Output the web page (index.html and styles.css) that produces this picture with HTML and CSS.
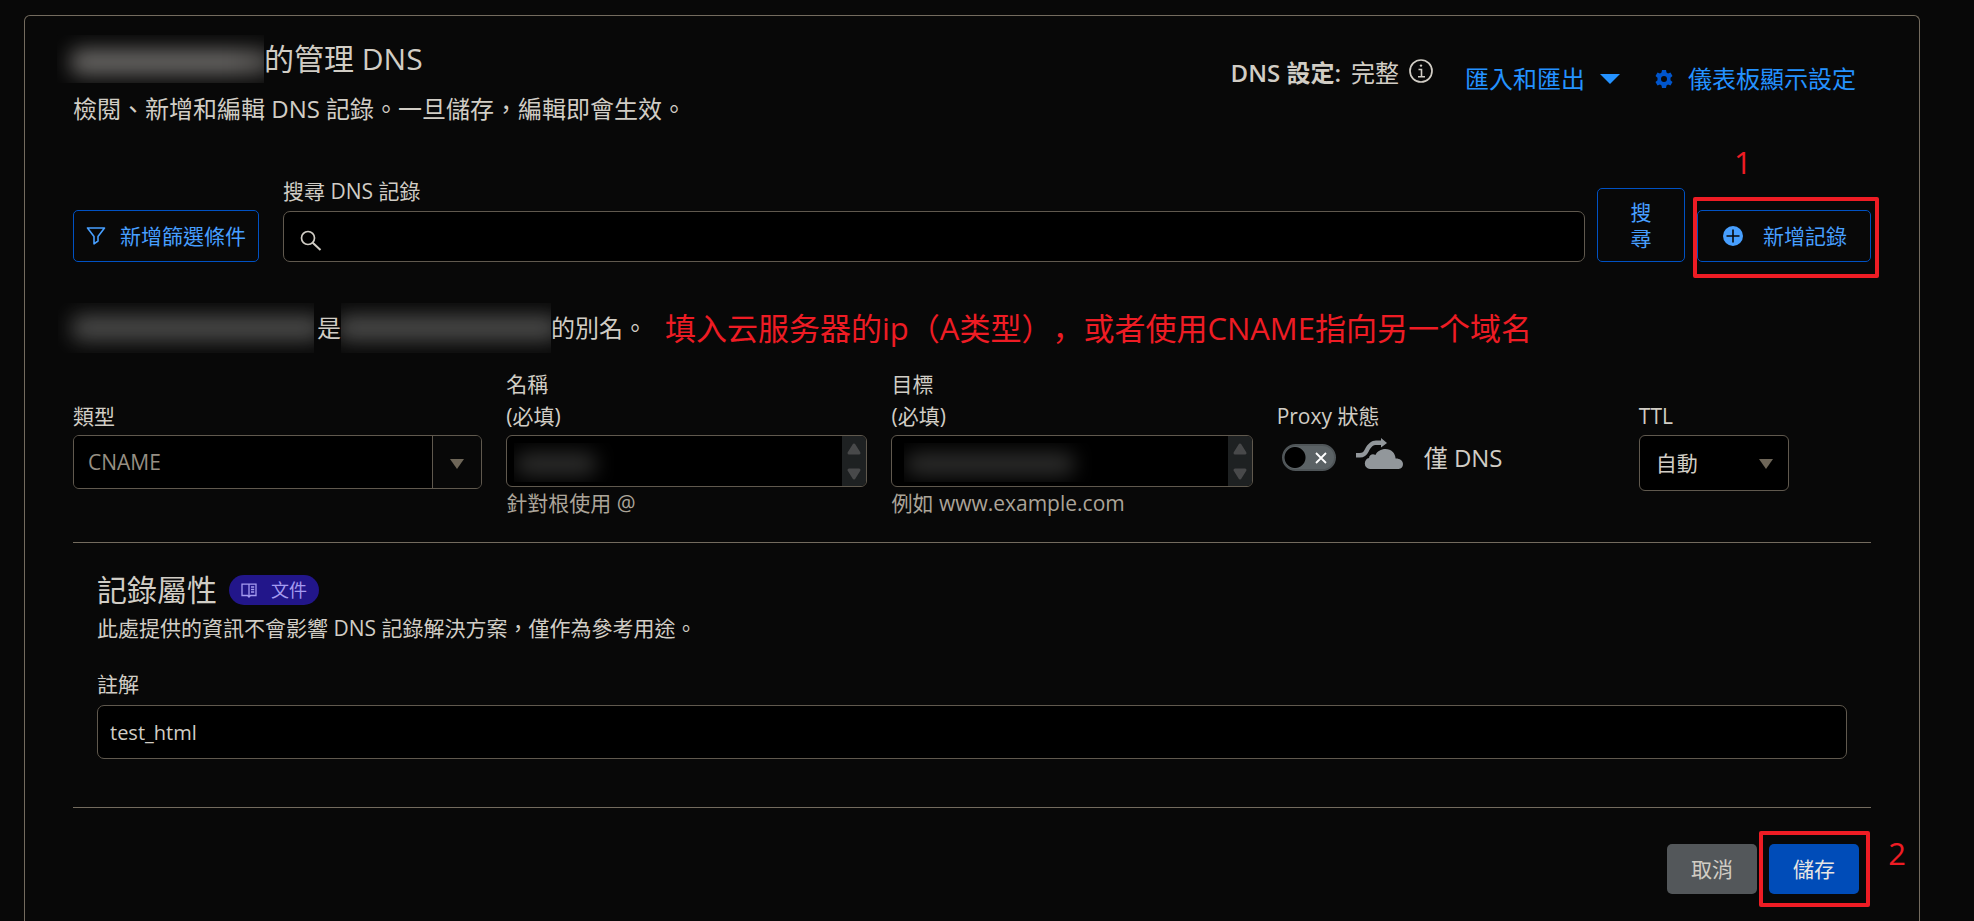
FILE: index.html
```html
<!DOCTYPE html>
<html lang="zh-Hant">
<head>
<meta charset="utf-8">
<meta name="viewport" content="width=device-width, initial-scale=1">
<title>DNS 記錄</title>
<link rel="stylesheet" href="styles.css">
</head>
<body>
<main class="card">
  <header class="header">
    <div>
      <h1 class="title"><span class="redacted redacted-title" aria-hidden="true"></span>的管理 DNS</h1>
      <p class="subtitle">檢閱、新增和編輯 DNS 記錄。一旦儲存，編輯即會生效。</p>
    </div>
    <div class="header-tools">
      <p class="status"><strong>DNS 設定:</strong><span>完整</span>
        <svg class="icon-info" viewBox="0 0 24 24" aria-hidden="true"><circle cx="12" cy="12" r="11" fill="none" stroke="currentColor" stroke-width="1.7"/><path d="M9.5 10.5h3v7M9 17.7h7" fill="none" stroke="currentColor" stroke-width="1.6"/><circle cx="12" cy="6.6" r="1.2" fill="currentColor"/></svg>
      </p>
      <button class="link-button" type="button">匯入和匯出
        <svg class="icon-caret" viewBox="0 0 20 10" aria-hidden="true"><path d="M0 0h20L10 10z" fill="currentColor"/></svg>
      </button>
      <a class="link-button settings" href="#settings">
        <svg class="icon-gear" viewBox="0 0 18 18" aria-hidden="true"><path fill-rule="evenodd" fill="currentColor" d="M7 0h4l.5 2.600 1.500.9 2.500-.9 2 3.400-2 1.800v2.400l2 1.800-2 3.400-2.500-.9-1.500.9L11 18H7l-.5-2.600-1.500-.9-2.500.9-2-3.400 2-1.800V7.800L.5 6l2-3.400 2.500.9 1.500-.9zM9 6a3 3 0 1 0 0 6a3 3 0 0 0 0-6z"/></svg>
        儀表板顯示設定</a>
    </div>
  </header>

  <form class="toolbar">
    <button class="button-outline filter" type="button">
      <svg class="icon-filter" viewBox="0 0 20 20" aria-hidden="true"><path d="M1.500 2h17L12 10.500V15l-4 2.800v-7.300z" fill="none" stroke="currentColor" stroke-width="1.600" stroke-linejoin="round"/></svg>
      新增篩選條件
    </button>
    <div class="search">
      <label class="label" for="search">搜尋 DNS 記錄</label>
      <div class="search-box">
        <svg class="icon-search" viewBox="0 0 22 22" aria-hidden="true"><circle cx="8" cy="8" r="6.500" fill="none" stroke="currentColor" stroke-width="1.700"/><path d="M12.700 12.700l7.800 7.300" stroke="currentColor" stroke-width="2"/></svg>
        <input class="search-input" id="search" type="text">
      </div>
    </div>
    <button class="button-outline search-button" type="submit">搜<br>尋</button>
    <div class="marked">
      <button class="button-outline add" type="button">
        <svg class="icon-plus" viewBox="0 0 20 20" aria-hidden="true"><circle cx="10" cy="10" r="10" fill="currentColor"/><path d="M10 3.500v13M3.500 10h13" stroke="#080808" stroke-width="1.600"/></svg>
        新增記錄
      </button>
      <span class="mark-box mark-box-add"></span>
      <span class="mark-number mark-number-add">1</span>
    </div>
  </form>

  <div class="alias">
    <p class="alias-text"><span class="redacted redacted-source" aria-hidden="true"></span>是<span class="redacted redacted-alias" aria-hidden="true"></span>的別名。</p>
    <p class="note" lang="zh-Hans">填入云服务器的ip（A类型），或者使用CNAME指向另一个域名</p>
  </div>

  <form class="record">
    <div class="fields">
      <div class="field">
        <label class="label field-label" for="type">類型</label>
        <div class="select-box type-box">
          <select class="select type-select" id="type"><option>CNAME</option></select>
          <svg class="select-arrow type-arrow" viewBox="0 0 14 10" aria-hidden="true"><path d="M0 0h14L7 10z" fill="currentColor"/></svg>
        </div>
      </div>
      <div class="field">
        <label class="label field-label" for="name"><span>名稱</span><span>(必填)</span></label>
        <div class="text-box">
          <textarea class="textarea" id="name" rows="1"></textarea>
          <span class="redacted redacted-name" aria-hidden="true"></span>
          <svg class="scroller" viewBox="0 0 24 50" aria-hidden="true"><path d="M12 9l5 8H7zM12 42l5-8H7z" fill="currentColor" stroke="currentColor" stroke-width="3" stroke-linejoin="round"/></svg>
        </div>
        <p class="hint">針對根使用 @</p>
      </div>
      <div class="field">
        <label class="label field-label" for="target"><span>目標</span><span>(必填)</span></label>
        <div class="text-box">
          <textarea class="textarea" id="target" rows="1"></textarea>
          <span class="redacted redacted-target" aria-hidden="true"></span>
          <svg class="scroller" viewBox="0 0 24 50" aria-hidden="true"><path d="M12 9l5 8H7zM12 42l5-8H7z" fill="currentColor" stroke="currentColor" stroke-width="3" stroke-linejoin="round"/></svg>
        </div>
        <p class="hint">例如 www.example.com</p>
      </div>
      <div class="field">
        <label class="label field-label" for="proxy">Proxy 狀態</label>
        <div class="proxy">
          <span class="toggle">
            <input class="toggle-input" id="proxy" type="checkbox">
            <svg class="toggle-cross" viewBox="0 0 12 12" aria-hidden="true"><path d="M1 1l10 10M11 1L1 11" stroke="currentColor" stroke-width="1.800"/></svg>
          </span>
          <svg class="icon-cloud" viewBox="0 0 47 31" aria-hidden="true"><path fill="currentColor" d="M14 31a5.500 5.500 0 0 1-5.200-5.500c0-3 2-5.200 4.200-5.600c.3-2.200 2-3.600 4-3.600c1 0 1.700.2 2.400.7C21 13.500 25 11 29.500 11c5.700 0 9.800 4.100 10.100 9.500C43.500 20.300 47 22.500 47 26a5 5 0 0 1-4.500 5z"/><path fill="currentColor" d="M0 15h3.500c3 0 4-1 5.500-4C12 5.500 15.500 2.500 20 2.500h5V0l6 5-6 4.500V7h-4.500c-3.700 0-5.400 1.800-7.800 6.500C10.500 17.500 8 19.500 4 19.500H0z"/></svg>
          <span class="proxy-text">僅 DNS</span>
        </div>
      </div>
      <div class="field">
        <label class="label field-label" for="ttl">TTL</label>
        <div class="select-box ttl-box">
          <select class="select ttl-select" id="ttl"><option>自動</option></select>
          <svg class="select-arrow ttl-arrow" viewBox="0 0 14 10" aria-hidden="true"><path d="M0 0h14L7 10z" fill="currentColor"/></svg>
        </div>
      </div>
    </div>

    <section class="attributes">
      <div class="attributes-head">
        <h2 class="section-title">記錄屬性</h2>
        <a class="badge" href="#docs">
          <svg class="icon-book" viewBox="0 0 16 16" aria-hidden="true"><path d="M8 2.200H1v11.300h5.500L8 15l1.500-1.500H15V2.200H8zM8 2.200V15M10 5h3.200M10 7.500h3.200M10 10h3.200" fill="none" stroke="currentColor" stroke-width="1.300"/></svg>
          文件</a>
      </div>
      <p class="description">此處提供的資訊不會影響 DNS 記錄解決方案，僅作為參考用途。</p>
      <label class="label comment-label" for="comment">註解</label>
      <input class="comment" id="comment" type="text" value="test_html">
    </section>

    <div class="actions">
      <button class="button cancel" type="button">取消</button>
      <div class="marked">
        <button class="button save" type="submit">儲存</button>
        <span class="mark-box mark-box-save"></span>
        <span class="mark-number mark-number-save">2</span>
      </div>
    </div>
  </form>
</main>
</body>
</html>
```

FILE: styles.css
```css
* {
  box-sizing: border-box;
}

body {
  margin: 0;
  min-height: 100vh;
  display: flex;
  padding: 15px 54px 0 24px;
  background: #080808;
  color: #d1cdc5;
  font-family: "Open Sans", "Noto Sans CJK TC", sans-serif;
  font-size: 21px;
  line-height: 28px;
}

h1, h2, p {
  margin: 0;
  font-weight: 400;
}

button, input, select, textarea {
  margin: 0;
  font: inherit;
  color: inherit;
}

button {
  cursor: pointer;
}

a {
  text-decoration: none;
}

svg {
  display: block;
  flex: none;
}

.card {
  flex: 1;
  min-width: 0;
  padding: 23px 48px 0;
  border: 1px solid #736b5e;
  border-bottom: 0;
  border-radius: 6px 6px 0 0;
}

/* Header */

.header {
  display: flex;
  justify-content: space-between;
}

.title {
  display: flex;
  align-items: center;
  height: 40px;
  font-size: 30px;
  line-height: 40px;
}

.subtitle {
  margin-top: 14px;
  font-size: 24px;
  line-height: 32px;
}

.header-tools {
  display: flex;
  align-items: flex-start;
  padding: 18px 15px 0 0;
  font-size: 24px;
  line-height: 32px;
}

.status {
  display: flex;
  gap: 10px;
  margin-right: 32px;
}

.status strong {
  font-weight: 600;
}

.icon-info {
  width: 24px;
  height: 24px;
  margin-top: 2px;
}

.link-button {
  display: flex;
  align-items: center;
  gap: 15px;
  margin-top: 6px;
  padding: 0;
  border: 0;
  background: none;
  color: #2492ff;
}

.settings {
  gap: 15px;
  margin-left: 35px;
}

.icon-caret {
  width: 20px;
  height: 10px;
}

.icon-gear {
  width: 18px;
  height: 18px;
  color: #0055cc;
}

/* Blurred-out private names */

.redacted {
  flex: none;
  overflow: hidden;
  pointer-events: none;
}

.redacted::before {
  content: "";
  display: block;
  height: 26px;
  margin: 12px -8px 0 14px;
  border-radius: 8px;
  background: #4a4a49;
  filter: blur(10px);
}

.redacted-title {
  width: 207px;
  height: 48px;
  margin-left: -16px;
}

.redacted-title::before {
  margin-top: 14px;
  background: linear-gradient(to right, #686664 80%, #4c4a48);
}

.redacted-source {
  width: 256px;
  height: 50px;
  margin: 0 3px 0 -15px;
}

.redacted-alias {
  width: 210px;
  height: 50px;
}

.redacted-alias::before {
  margin-left: -4px;
}

.redacted-name,
.redacted-target {
  position: absolute;
  top: 7px;
  left: 7px;
  width: 100px;
  height: 39px;
}

.redacted-target {
  left: 12px;
  width: 188px;
}

.redacted-name::before,
.redacted-target::before {
  height: 22px;
  margin: 10px 18px 0 2px;
  background: #2f2f2e;
}

/* Search toolbar */

.toolbar {
  display: flex;
  align-items: flex-end;
  gap: 12px;
  margin-top: 52px;
}

.button-outline {
  display: flex;
  align-items: center;
  justify-content: center;
  height: 52px;
  border: 1px solid #0051c3;
  border-radius: 5px;
  background: #080808;
  color: #479fff;
}

.filter {
  gap: 14px;
  margin-right: 12px;
  padding: 0 12px;
}

.icon-filter {
  width: 20px;
  height: 20px;
}

.search {
  flex: 1;
}

.label {
  display: block;
}

.search-box {
  display: flex;
  align-items: center;
  height: 51px;
  margin-top: 6px;
  padding-left: 16px;
  border: 1px solid #60594e;
  border-radius: 7px;
  background: #000;
}

.icon-search {
  width: 22px;
  height: 22px;
  margin-top: 8px;
}

.search-input {
  flex: 1;
  height: 100%;
  padding: 0 12px;
  border: 0;
  outline: 0;
  background: none;
}

.search-button {
  width: 88px;
  height: 74px;
  line-height: 26px;
}

.marked {
  position: relative;
}

.add {
  gap: 20px;
  padding: 0 23px 0 25px;
}

.icon-plus {
  width: 20px;
  height: 20px;
}

/* Red markers drawn over the controls */

.mark-box {
  position: absolute;
  border: 4px solid #ee1c24;
  border-radius: 2px;
  pointer-events: none;
}

.mark-box-add {
  inset: -13px -8px -16px -4px;
}

.mark-box-save {
  inset: -13px -11px -13px -10px;
}

.mark-number {
  position: absolute;
  color: #ee1c24;
  font-size: 31px;
  line-height: 40px;
}

.mark-number-add {
  top: -68px;
  left: 37px;
}

.mark-number-save {
  top: -11px;
  right: -47px;
}

/* Alias line */

.alias {
  display: flex;
  align-items: center;
  gap: 18px;
  height: 40px;
  margin-top: 46px;
}

.alias-text {
  display: flex;
  align-items: center;
  font-size: 24px;
}

.note {
  color: #ee1c24;
  font-family: "Open Sans", "Noto Sans CJK SC", sans-serif;
  font-size: 31px;
  line-height: 40px;
  text-spacing-trim: space-all;
  white-space: nowrap;
}

/* Record fields */

.fields {
  display: grid;
  grid-template-columns: 409fr 361fr 361fr 338fr 232fr;
  gap: 24px;
  margin-top: 20px;
  padding-bottom: 25px;
  border-bottom: 1px solid #736b5e;
}

.field {
  min-width: 0;
}

.field-label {
  display: flex;
  flex-direction: column;
  justify-content: flex-end;
  height: 64px;
  margin-bottom: 3px;
  line-height: 32px;
}

.select-box,
.text-box {
  position: relative;
  display: flex;
  overflow: hidden;
  border: 1px solid #60594e;
  border-radius: 6px;
  background: #000;
}

.select {
  flex: 1;
  appearance: none;
  height: 100%;
  border: 0;
  background: none;
}

.select-arrow {
  position: absolute;
  top: 23px;
  width: 14px;
  height: 10px;
  color: #6e6658;
  pointer-events: none;
}

.type-box {
  height: 54px;
}

.type-select {
  padding: 0 60px 0 14px;
  background: linear-gradient(to left, #080808 48px, #60594e 48px, #60594e 49px, #000 49px);
  color: #968f83;
}

.type-arrow {
  right: 17px;
}

.ttl-box {
  width: 150px;
  height: 56px;
}

.ttl-select {
  padding: 0 40px 0 16px;
}

.ttl-arrow {
  right: 15px;
}

.text-box {
  height: 52px;
}

.textarea {
  flex: 1;
  min-width: 0;
  padding: 11px;
  border: 0;
  outline: 0;
  resize: none;
  overflow: hidden;
  background: none;
}

.scroller {
  width: 24px;
  height: 50px;
  background: #1e2122;
  color: #48494a;
}

.hint {
  margin-top: 2px;
  color: #aba499;
}

.proxy {
  display: flex;
  align-items: center;
  padding: 3px 0 0 5px;
}

.toggle {
  position: relative;
  display: flex;
}

.toggle-input {
  appearance: none;
  width: 54px;
  height: 27px;
  border: 2px solid #4f5558;
  border-radius: 14px;
  background: radial-gradient(circle at 11px 50%, #000 10px, #5b6265 11px);
}

.toggle-cross {
  position: absolute;
  top: 8px;
  right: 9px;
  width: 12px;
  height: 12px;
  color: #fff;
  pointer-events: none;
}

.icon-cloud {
  width: 47px;
  height: 31px;
  margin: 0 21px 8px 20px;
  color: #92979b;
}

.proxy-text {
  font-size: 24px;
}

/* Record attributes */

.attributes {
  padding: 27px 24px 48px;
  border-bottom: 1px solid #736b5e;
}

.attributes-head {
  display: flex;
  align-items: center;
  gap: 12px;
}

.section-title {
  font-size: 30px;
  line-height: 40px;
}

.badge {
  display: flex;
  align-items: center;
  gap: 14px;
  height: 30px;
  padding: 0 12px;
  border-radius: 15px;
  background: #22168a;
  color: #a59bf0;
  font-size: 18px;
}

.icon-book {
  width: 16px;
  height: 16px;
}

.description {
  margin-top: 4px;
}

.comment-label {
  margin-top: 28px;
}

.comment {
  display: block;
  width: 100%;
  height: 54px;
  margin-top: 7px;
  padding: 0 12px;
  border: 1px solid #60594e;
  border-radius: 7px;
  outline: 0;
  background: #000;
  font-size: 20px;
}

/* Actions */

.actions {
  display: flex;
  justify-content: flex-end;
  gap: 12px;
  padding: 36px 12px 0 0;
}

.button {
  width: 90px;
  height: 50px;
  padding: 0;
  border: 0;
  border-radius: 5px;
}

.cancel {
  background: #53575a;
}

.save {
  background: #004cb8;
  color: #e8e6e3;
}
```
